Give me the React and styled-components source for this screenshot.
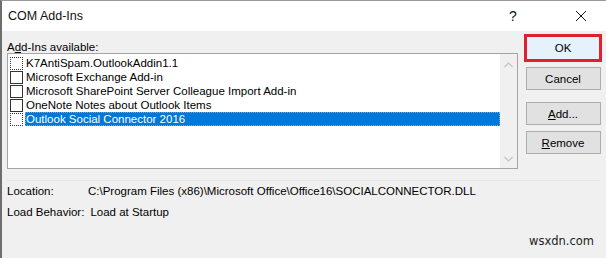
import styled, { createGlobalStyle } from "styled-components";

const addins = [
  { name: "K7AntiSpam.OutlookAddin1.1", focus: true },
  { name: "Microsoft Exchange Add-in" },
  { name: "Microsoft SharePoint Server Colleague Import Add-in" },
  { name: "OneNote Notes about Outlook Items" },
  { name: "Outlook Social Connector 2016", selected: true, focus: true },
];

const App = () => {
  return <Window>
    <GlobalStyle />
    <TitleBar>
      <Title>COM Add-Ins</Title>
      <TitleButton>?</TitleButton>
      <TitleButton>
        <svg width="12" height="12" viewBox="0 0 12 12">
          <path d="M1 1 L11 11 M11 1 L1 11" stroke="#111" strokeWidth="1" />
        </svg>
      </TitleButton>
    </TitleBar>

    <Body>
      <ListColumn>
        <Caption>A<u>d</u>d-Ins available:</Caption>
        <ListBox>
          <Items>
            {addins.map((a) => (
              <Item key={a.name}>
                <Check $focus={a.focus} />
                <ItemText $selected={a.selected}>{a.name}</ItemText>
              </Item>
            ))}
          </Items>
          <ScrollBar>
            <svg width="9" height="6" viewBox="0 0 9 6">
              <path d="M0.5 5 L4.5 1 L8.5 5" fill="none" stroke="#c2c2c2" strokeWidth="1.2" />
            </svg>
            <svg width="9" height="6" viewBox="0 0 9 6">
              <path d="M0.5 1 L4.5 5 L8.5 1" fill="none" stroke="#c2c2c2" strokeWidth="1.2" />
            </svg>
          </ScrollBar>
        </ListBox>
      </ListColumn>

      <Buttons>
        <Button $primary>OK</Button>
        <Button $space={5}>Cancel</Button>
        <Button $space={12}>
          <u>A</u>dd...
        </Button>
        <Button $space={6}>
          <u>R</u>emove
        </Button>
      </Buttons>
    </Body>

    <Details>
      <Row>
        <Label>Location:</Label>
        <span>C:\Program Files (x86)\Microsoft Office\Office16\SOCIALCONNECTOR.DLL</span>
      </Row>
      <Row>
        <Label>Load Behavior:</Label>
        <span>Load at Startup</span>
      </Row>
    </Details>

    <Watermark>wsxdn.com</Watermark>
  </Window>;
};

export default App;


const GlobalStyle = createGlobalStyle`
  html, body {
    margin: 0;
    padding: 0;
    background: #f0f0f0;
    overflow: hidden;
  }
  * {
    box-sizing: border-box;
  }
`

const Window = styled.div`
  width: 606px;
  height: 258px;
  background: #f0f0f0;
  border-top: 1px solid #9a9a9a;
  border-left: 2px solid #6e6e6e;
  font-family: "Liberation Sans", Arial, sans-serif;
  font-size: 11.5px;
  color: #000;
  position: relative;
  display: flex;
  flex-direction: column;
`

const TitleBar = styled.div`
  height: 30px;
  background: #fff;
  display: flex;
  align-items: center;
  padding-left: 6px;
  padding-right: 2px;
`

const Title = styled.div`
  flex: 1;
  font-size: 12.5px;
  color: #111;
`

const TitleButton = styled.div`
  width: 46px;
  height: 30px;
  display: flex;
  align-items: center;
  justify-content: center;
  font-size: 14px;
  color: #111;
  margin-left: 22px;

  &:first-of-type {
    margin-left: 0;
  }
`

const Body = styled.div`
  display: flex;
  padding: 3px 6px 0 5px;
  gap: 6px;
`

const ListColumn = styled.div`
  display: flex;
  flex-direction: column;
`

const Caption = styled.div`
  height: 19px;
  padding-top: 6px;
  line-height: 14px;
`

const ListBox = styled.div`
  width: 511px;
  height: 116px;
  border: 1px solid #a5a5a5;
  background: #fff;
  display: flex;
`

const Items = styled.div`
  flex: 1;
  padding: 2px 0 0 2px;
`

const Item = styled.div`
  height: 14px;
  display: flex;
  align-items: center;
  line-height: 14px;
`

const Check = styled.span`
  width: 13px;
  height: 13px;
  background: #fff;
  border: 1px solid #333;
  border-style: ${(p) => (p.$focus ? "dotted" : "solid")};
  margin-right: 2px;
  flex-shrink: 0;
`

const ItemText = styled.span`
  flex: ${(p) => (p.$selected ? 1 : "0 0 auto")};
  padding: 0 2px 0 1px;
  height: 14px;
  background: ${(p) => (p.$selected ? "#0078d7" : "transparent")};
  color: ${(p) => (p.$selected ? "#fff" : "#000")};
  outline: ${(p) => (p.$selected ? "1px dotted #7aa9d6" : "none")};
  outline-offset: -1px;
`

const ScrollBar = styled.div`
  width: 17px;
  background: #f0f0f0;
  display: flex;
  flex-direction: column;
  justify-content: space-between;
  align-items: center;
  padding: 8px 0 6px;
`

const Buttons = styled.div`
  display: flex;
  flex-direction: column;
  align-items: center;
  width: 78px;
`

const Button = styled.div`
  width: ${(p) => (p.$primary ? "78px" : "75px")};
  height: ${(p) => (p.$primary ? "28px" : "23px")};
  border: ${(p) => (p.$primary ? "3px solid #e0202c" : "1px solid #adadad")};
  background: ${(p) => (p.$primary ? "#e5f1fb" : "#e1e1e1")};
  display: flex;
  align-items: center;
  justify-content: center;
  margin-top: ${(p) => p.$space || 0}px;
`

const Details = styled.div`
  margin: 11px 6px 0 5px;
  padding-top: 3px;
  border-top: 1px solid #e3e3e3;
  display: flex;
  flex-direction: column;
  gap: 7px;
  line-height: 14px;
`

const Row = styled.div`
  display: flex;
`

const Label = styled.span`
  min-width: 81px;
  padding-right: 6px;
`

const Watermark = styled.div`
  position: absolute;
  right: 12px;
  bottom: 10px;
  font-family: "DejaVu Sans", sans-serif;
  font-size: 11.5px;
  color: #222;
`
